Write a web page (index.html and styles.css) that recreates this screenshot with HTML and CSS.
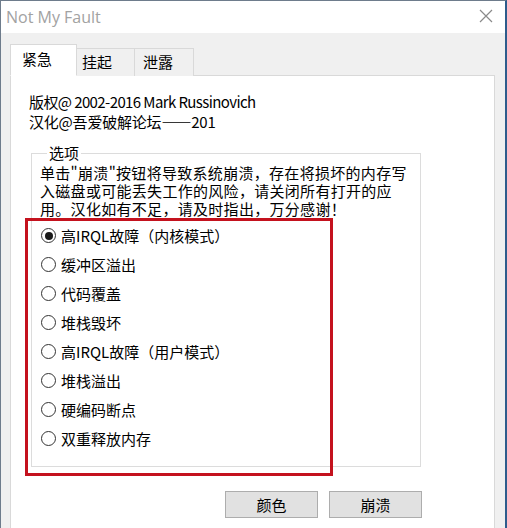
FILE: index.html
```html
<!DOCTYPE html>
<html lang="zh-CN">
<head>
<meta charset="utf-8">
<title>Not My Fault</title>
<link rel="stylesheet" href="styles.css">
</head>
<body>
<div class="window">
  <div class="titlebar">
    <span class="title">Not My Fault</span>
    <svg class="close" width="14" height="14" viewBox="0 0 14 14"><path d="M1 1L13 13M13 1L1 13" stroke="#8a8a8a" stroke-width="1.2" fill="none"/></svg>
  </div>
  <div class="content">
    <div class="tabs">
      <div class="tab active">紧急</div>
      <div class="tab">挂起</div>
      <div class="tab">泄露</div>
    </div>
    <div class="panel">
      <div class="copyright">
        <div class="line-en">版权@ 2002-2016 Mark Russinovich</div>
        <div class="line-cn">汉化@吾爱破解论坛——201</div>
      </div>
      <fieldset class="group">
        <legend>选项</legend>
        <p class="desc">单击"崩溃"按钮将导致系统崩溃，存在将损坏的内存写入磁盘或可能丢失工作的风险，请关闭所有打开的应用。汉化如有不足，请及时指出，万分感谢！</p>
        <div class="options">
          <label class="opt"><span class="radio checked"></span>高IRQL故障（内核模式）</label>
          <label class="opt"><span class="radio"></span>缓冲区溢出</label>
          <label class="opt"><span class="radio"></span>代码覆盖</label>
          <label class="opt"><span class="radio"></span>堆栈毁坏</label>
          <label class="opt"><span class="radio"></span>高IRQL故障（用户模式）</label>
          <label class="opt"><span class="radio"></span>堆栈溢出</label>
          <label class="opt"><span class="radio"></span>硬编码断点</label>
          <label class="opt"><span class="radio"></span>双重释放内存</label>
        </div>
      </fieldset>
      <div class="buttons">
        <button class="btn">颜色</button>
        <button class="btn">崩溃</button>
      </div>
      <div class="highlight"></div>
    </div>
  </div>
</div>
</body>
</html>
```
FILE: styles.css
```css
* { box-sizing: border-box; }
html, body { margin: 0; padding: 0; }
body {
  width: 507px;
  height: 528px;
  overflow: hidden;
  background: #f0f0f0;
  font-family: "Noto Sans CJK SC", sans-serif;
  color: #000;
}
.window {
  height: 528px;
  display: flex;
  flex-direction: column;
  border-left: 1px solid #6e7c8c;
  border-top: 1px solid #6e7c8c;
  border-right: 2px solid #2e5c8c;
  background: #f0f0f0;
}
.titlebar {
  height: 32px;
  flex: none;
  background: #fff;
  display: flex;
  align-items: center;
  justify-content: space-between;
  padding: 0 12px 0 5px;
}
.title {
  font-family: "Open Sans", "Noto Sans", sans-serif;
  font-size: 16px;
  color: #a2a2a2;
}
.close { display: block; margin-top: -2px; }
.content {
  flex: 1;
  display: flex;
  flex-direction: column;
  padding: 12px 10px 0 9px;
  min-height: 0;
}
.tabs {
  display: flex;
  align-items: flex-end;
  height: 31px;
  flex: none;
  position: relative;
  z-index: 1;
  margin-bottom: -1px;
}
.tab {
  font-size: 15px;
  height: 28px;
  line-height: 26px;
  white-space: nowrap;
  padding: 0;
  border: 1px solid #d9d9d9;
  border-bottom: none;
  border-left: none;
  background: #f0f0f0;
}
.tab:nth-child(2) { width: 58px; padding-left: 5px; }
.tab:nth-child(3) { width: 59px; padding-left: 8px; }
.tab.active {
  width: 67px;
  height: 32px;
  line-height: 28px;
  padding-left: 11px;
  background: #fff;
  border-left: 1px solid #d9d9d9;
  border-bottom: 1px solid #fff;
}
.panel {
  flex: 1;
  position: relative;
  background: #fff;
  border: 1px solid #d9d9d9;
  border-bottom: none;
  padding: 16px 0 0 18px;
  min-height: 0;
}
.copyright {
  font-size: 15px;
  line-height: 20px;
}
.line-en { letter-spacing: -0.6px; }
.line-cn { letter-spacing: -0.2px; }
.group {
  margin: 12px 0 0 2px;
  width: 390px;
  padding: 2px 10px 13px 8px;
  border: 1px solid #dcdcdc;
  min-width: 0;
}
.group legend {
  font-size: 15px;
  line-height: 18px;
  padding: 0 2px;
  margin-left: 7px;
}
.desc {
  margin: 0;
  font-size: 15px;
  line-height: 18px;
  letter-spacing: 0.3px;
}
.options {
  margin-top: 3px;
  display: flex;
  flex-direction: column;
}
.opt {
  height: 29px;
  display: flex;
  align-items: center;
  font-size: 15px;
  padding-left: 1px;
}
.radio {
  width: 15px;
  height: 15px;
  border: 1px solid #333;
  border-radius: 50%;
  background: #fff;
  margin-right: 5px;
  display: flex;
  align-items: center;
  justify-content: center;
  flex: none;
}
.radio.checked::after {
  content: "";
  width: 8px;
  height: 8px;
  border-radius: 50%;
  background: #1a1a1a;
}
.buttons {
  display: flex;
  justify-content: flex-end;
  gap: 11px;
  width: 393px;
  margin-top: 24px;
}
.btn {
  width: 93px;
  height: 27px;
  background: #e1e1e1;
  border: 1px solid #adadad;
  font-family: "Noto Sans CJK SC", sans-serif;
  font-size: 15px;
  padding: 0;
  color: #000;
}
.highlight {
  position: absolute;
  left: 14px;
  top: 142px;
  width: 308px;
  height: 258px;
  border: 3px solid #c4121e;
  pointer-events: none;
}
```
